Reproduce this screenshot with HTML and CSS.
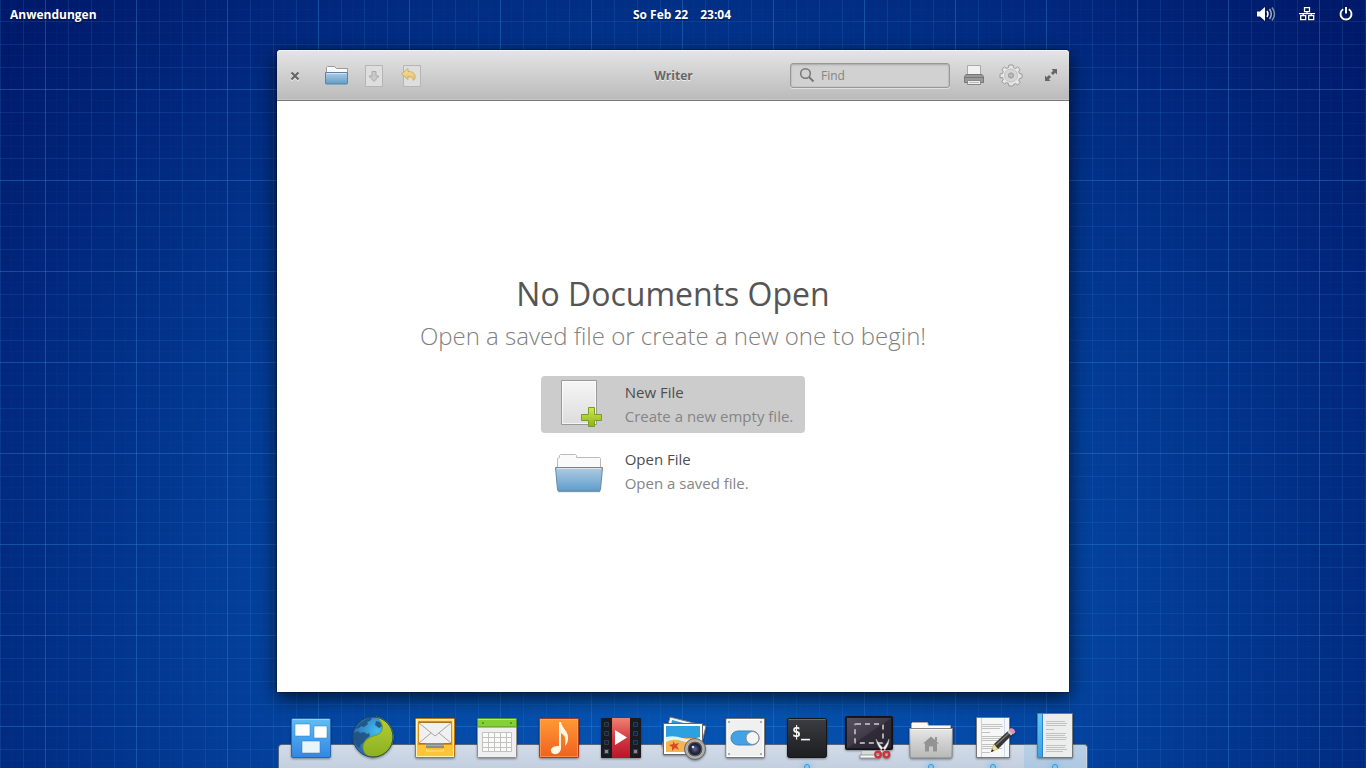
FILE: index.html
```html
<!DOCTYPE html>
<html lang="de">
<head>
<meta charset="utf-8">
<title>Writer</title>
<link rel="stylesheet" href="styles.css">
</head>
<body class="desktop">
<svg class="defs" aria-hidden="true">
  <defs>
    <linearGradient id="blue" x2="0" y2="1"><stop stop-color="#60bdef"/><stop offset="1" stop-color="#3386e5"/></linearGradient>
    <linearGradient id="cyan" x2="0" y2="1"><stop stop-color="#62c8ee"/><stop offset="1" stop-color="#3f9fe6"/></linearGradient>
    <linearGradient id="folder" x2="0" y2="1"><stop stop-color="#b0cce3"/><stop offset="1" stop-color="#5f9dcb"/></linearGradient>
    <linearGradient id="paper" x2="0" y2="1"><stop stop-color="#f6f6f6"/><stop offset="1" stop-color="#dcdcdc"/></linearGradient>
    <linearGradient id="green" x2="0" y2="1"><stop stop-color="#d2e84c"/><stop offset="1" stop-color="#8cb41a"/></linearGradient>
    <linearGradient id="lime" x2="0" y2="1"><stop stop-color="#b3cf36"/><stop offset="1" stop-color="#8db01f"/></linearGradient>
    <radialGradient id="sea" cx=".6" cy=".35" r=".6"><stop stop-color="#43bdf0"/><stop offset="1" stop-color="#2a6cb4"/></radialGradient>
    <linearGradient id="amber" x2="0" y2="1"><stop stop-color="#ffe08a"/><stop offset=".6" stop-color="#ffc83c"/><stop offset="1" stop-color="#f9b02c"/></linearGradient>
    <linearGradient id="orange" x2="0" y2="1"><stop stop-color="#ff9a35"/><stop offset="1" stop-color="#f0601f"/></linearGradient>
    <linearGradient id="red" x2="0" y2="1"><stop stop-color="#f08070"/><stop offset=".55" stop-color="#d03540"/><stop offset="1" stop-color="#ba1528"/></linearGradient>
    <linearGradient id="dark" x2="0" y2="1"><stop stop-color="#3a3d42"/><stop offset="1" stop-color="#1c1e20"/></linearGradient>
    <linearGradient id="screen" x2="1" y2="1"><stop stop-color="#555060"/><stop offset=".5" stop-color="#403a48"/><stop offset=".51" stop-color="#302b38"/><stop offset="1" stop-color="#282430"/></linearGradient>
    <linearGradient id="silver" x2="0" y2="1"><stop stop-color="#e6e6e6"/><stop offset="1" stop-color="#b8b8b8"/></linearGradient>
    <radialGradient id="lens"><stop stop-color="#7c5f9b"/><stop offset=".6" stop-color="#27334e"/><stop offset="1" stop-color="#141a27"/></radialGradient>
    <linearGradient id="gold" x2="0" y2="1"><stop stop-color="#f7e3a0"/><stop offset="1" stop-color="#e4bd68"/></linearGradient>
  </defs>
</svg>

<header class="panel">
  <a class="panel-item" href="#apps">Anwendungen</a>
  <time class="panel-clock"><span>So Feb 22</span><span>23:04</span></time>
  <div class="indicators">
    <button class="indicator" aria-label="Lautstärke"><svg width="20" height="16" viewBox="0 0 20 16"><path d="M1 5.500h3L9 1v14L4 10.500H1z" fill="#fff"/><g fill="none" stroke="#fff" stroke-width="1.500"><path d="M11 5q2 3 0 6"/><path d="M13.500 3q3.500 5 0 10" opacity=".65"/><path d="M16 1.500q5 6.500 0 13" opacity=".5"/></g></svg></button>
    <button class="indicator" aria-label="Netzwerk"><svg width="16" height="16" viewBox="0 0 16 16" fill="none" stroke="#fff" stroke-width="1.300"><path d="M5.500 1.700h5v4h-5zM1.700 9.700h5v4h-5zM9.700 9.700h5v4h-5zM8 6v1.700M0 7.700h16M4.200 8v2M12.200 8v2"/></svg></button>
    <button class="indicator" aria-label="Sitzung"><svg width="16" height="16" viewBox="0 0 16 16" fill="none" stroke="#fff" stroke-width="1.900"><path d="M5.200 3.300a5.500 5.500 0 1 0 5.600 0M8 1v6.500"/></svg></button>
  </div>
</header>

<main class="workspace">
  <section class="window" aria-label="Writer">
    <header class="titlebar">
      <div class="tools tools-start">
        <button class="tool tool-close" aria-label="Close"><svg width="12" height="12" viewBox="0 0 12 12"><path d="M2.500 3.500l7 7m0-7l-7 7" stroke="#f4f4f4" stroke-width="2.200"/><path d="M2.500 2.500l7 7m0-7l-7 7" stroke="#666" stroke-width="2.200"/></svg></button>
        <button class="tool" aria-label="Open"><svg width="24" height="24" viewBox="0 0 24 24"><path d="M1.500 10V3.500l1-1h7l2 2h11V10z" fill="#fafafa" stroke="#999"/><path d="M.5 8.500h22v10.500q0 1-1 1h-20q-1 0-1-1z" fill="url(#folder)" stroke="#5683a8"/><path d="M1.500 9.500h20" stroke="#d2e2ee"/></svg></button>
        <button class="tool" aria-label="Save"><svg width="24" height="24" viewBox="0 0 24 24"><path d="M2.500 1.500h17v21h-17z" fill="#dedede" stroke="#b5b5b5"/><path d="M9 7.500h4V12h3l-5 5.500L6 12h3z" fill="#c9c9c9" stroke="#aaa"/></svg></button>
        <button class="tool" aria-label="Revert"><svg width="24" height="24" viewBox="0 0 24 24"><path d="M2.500 1.500h17v21h-17z" fill="#dedede" stroke="#b5b5b5"/><path d="M.5 10L7 4.500v3q6 0 7 4 .8 3-1.500 5-.5-4-5.500-4v3z" fill="url(#gold)" stroke="#d5ad62"/></svg></button>
      </div>
      <h1 class="title">Writer</h1>
      <div class="tools tools-end">
        <label class="search"><svg width="16" height="16" viewBox="0 0 16 16" fill="none" stroke="#777"><circle cx="6.500" cy="6.500" r="4.800" stroke-width="1.500"/><path d="M10 10l4.500 4.500" stroke-width="2"/></svg><input class="search-input" type="text" placeholder="Find" aria-label="Find"></label>
        <button class="tool" aria-label="Print"><svg width="24" height="24" viewBox="0 0 24 24"><path d="M5.500 2.500h13v10h-13z" fill="#f1f1f1" stroke="#aaa"/><path d="M4 11.500h16l1.500 2v6h-19v-6z" fill="#999" stroke="#777"/><path d="M3 14.500h18" stroke="#777"/><path d="M5.500 17.500h13v4h-13z" fill="#eee" stroke="#888"/><path d="M7 19.500h10" stroke="#bbb"/></svg></button>
        <button class="tool" aria-label="Settings"><svg width="26" height="26" viewBox="0 0 26 26"><g fill="#e6e6e6" stroke="#999"><path d="M11 3h4l.6 2.600 1.800.8L19.700 5l2.400 2.400-1.400 2.300.8 1.800 2.500.6v3.800l-2.500.6-.8 1.800 1.400 2.300-2.400 2.400-2.300-1.400-1.800.8L15 24h-4l-.6-2.600-1.800-.8L6.300 22l-2.400-2.400 1.400-2.300-.8-1.800L2 15.900v-3.800l2.500-.6.8-1.800-1.400-2.300L6.300 5l2.300 1.400 1.800-.8z"/><circle cx="13" cy="13.500" r="6.500" fill="#d5d5d5" stroke="#c2c2c2"/><circle cx="13" cy="13.500" r="2.600" fill="#b8b8b8"/></g></svg></button>
        <button class="tool tool-max" aria-label="Maximize"><svg width="14" height="14" viewBox="0 0 14 14"><path d="M7.500 1H13v5.500l-1.700-1.700L9 7.100 6.900 5l2.300-2.300zM1 7.500l1.700 1.700L5 6.900 7.100 9l-2.300 2.300L6.500 13H1z" fill="#666"/></svg></button>
      </div>
    </header>
    <div class="welcome">
      <h2 class="welcome-title">No Documents Open</h2>
      <p class="welcome-text">Open a saved file or create a new one to begin!</p>
      <div class="choices">
        <button class="choice choice-active">
          <svg width="48" height="48" viewBox="0 1 48 48"><path d="M6.500 1.500h35v44h-35z" fill="url(#paper)" stroke="#999"/><path d="M7.500 2.500h33v42h-33z" fill="none" stroke="#fff" opacity=".7"/><path d="M33.500 28.500h6v7h7v6h-7v6h-6v-6h-7v-6h7z" fill="url(#green)" stroke="#7a9c29"/></svg>
          <span class="choice-text"><span class="choice-name">New File</span><span class="choice-note">Create a new empty file.</span></span>
        </button>
        <button class="choice">
          <svg width="48" height="48" viewBox="0 -2 48 48"><path d="M2.500 20V9.500l2-1V6.500l1-1h15l1 1v2h23l1 1V20z" fill="#fafafa" stroke="#bbb"/><path d="M.5 18.500h47l-2 22q0 1.500-1.500 1.500H4q-1.500 0-1.500-1.500z" fill="url(#folder)" stroke="#6489a6"/><path d="M2 19.500h44" stroke="#d7e4ee"/><path d="M3 42.700h42" stroke="#476987" opacity=".6"/></svg>
          <span class="choice-text"><span class="choice-name">Open File</span><span class="choice-note">Open a saved file.</span></span>
        </button>
      </div>
    </div>
  </section>
</main>

<nav class="dock" aria-label="Dock">
  <a class="app" href="#multitasking" aria-label="Arbeitsflächen"><svg class="app-icon" viewBox="0 0 62 55"><rect x="11.500" y="5.500" width="39" height="39" rx="1.500" fill="url(#blue)" stroke="#2468ae"/><path d="M12.500 6.500h37" stroke="#8ed4f7"/><g fill="#fff" stroke="#2b7bc6" stroke-opacity=".5"><path d="M15 11h15v12H15zM34 13h13v12H34z"/><path d="M22 28h18v12H22z" fill="#e8f6fa"/></g></svg></a>
  <a class="app" href="#web" aria-label="Internet"><svg class="app-icon" viewBox="0 0 62 55"><circle cx="31" cy="24" r="20" fill="url(#sea)"/><path d="M18 10l6-4 7-2-3 4-3 1 1 2-4 3-3-1-2 2-4 1zM12 20l4-2 2 2 4-1 3 2 2-1 1 3-4 3-2 4-3 1-2 4-3-3-2-5-1-3zM34 8l4 1 2 4-3 2-4-3z" fill="#204f7c" opacity=".85"/><path d="M34 4C42 9 43 19 35 22c-7 2-14 5-14 12 0 5 3 8 7 10A20 20 0 0 0 34 4z" fill="url(#lime)" stroke="#7c9b1c"/><circle cx="31" cy="24" r="20" fill="none" stroke="#294c60"/></svg></a>
  <a class="app" href="#mail" aria-label="E-Mail"><svg class="app-icon" viewBox="0 0 62 55"><rect x="11.500" y="5.500" width="39" height="39" rx="1" fill="url(#amber)" stroke="#b47514"/><path d="M12.500 6.500h37v37h-37z" fill="none" stroke="#fff0b4"/><path d="M14.500 8.500h33v23h-33z" fill="#a87524" stroke="#d68f18"/><path d="M15 10h32v20H15z" fill="#f0f0f0"/><path d="M15 10l16 13 16-13M15 30l12-10M47 30L35 20" fill="none" stroke="#a5a5a5"/><path d="M13 32h9v4h18v-4h9v11H13z" fill="#ffc43c"/><path d="M22 30h18v5H22z" fill="#8c8c88"/><path d="M22 32.500h18" stroke="#aaa"/><path d="M22.500 36v2h17v-2" fill="none" stroke="#ffe391"/></svg></a>
  <a class="app" href="#calendar" aria-label="Kalender"><svg class="app-icon" viewBox="0 0 62 55"><rect x="11.500" y="5.500" width="39" height="39" rx="1" fill="#efefef" stroke="#8e8e8e"/><path d="M11.500 14V6.500l1-1h37l1 1V14z" fill="#86cf37" stroke="#55991c"/><path d="M12.500 6.500h37" stroke="#b8ea78"/><path d="M16 9h2v2h-2zM44 9h2v2h-2z" fill="#579b24"/><path d="M16.500 19.500h29v19h-29zM22.500 19v19M28.500 19v19M34.500 19v19M40.500 19v19M16 24.500h29M16 29.500h29M16 34.500h29" fill="#fafafa" stroke="#c2c2c0"/></svg></a>
  <a class="app" href="#music" aria-label="Musik"><svg class="app-icon" viewBox="0 0 62 55"><rect x="11.500" y="5.500" width="39" height="39" rx="1" fill="url(#orange)" stroke="#a83c1e"/><path d="M12.500 6.500h37v37h-37z" fill="none" stroke="#ffb46a" opacity=".55"/><path d="M31 9h2c1 7 8 9 7 17-.3 3-1 5-3 7 1-6 1-10-4-13v15c0 4-4 7-7 6-6-2-3-9 5-8z" fill="#fff7e6"/></svg></a>
  <a class="app" href="#videos" aria-label="Videos"><svg class="app-icon" viewBox="0 0 62 55"><rect x="11" y="5" width="40" height="40" rx="1" fill="#191b20"/><path d="M22 5h18v40H22z" fill="url(#red)"/><path d="M25 17v15l12-7.500z" fill="#fff"/><g fill="#07264f" stroke="#353a40"><path d="M14.500 9.500h4v4h-4zM14.500 18.500h4v4h-4zM14.500 27.500h4v4h-4zM43.500 9.500h4v4h-4zM43.500 18.500h4v4h-4zM43.500 27.500h4v4h-4z"/><path d="M14.500 36.500h4v4h-4zM43.500 36.500h4v4h-4z" fill="#888"/></g></svg></a>
  <a class="app" href="#photos" aria-label="Fotos"><svg class="app-icon" viewBox="0 0 62 55"><path d="M18 4l36 9-7 29-37-9z" fill="#f6f6f6" stroke="#777"/><path d="M20 7l31 8-2 7-30-8z" fill="#259bd8"/><path d="M11.500 10.500h39v31h-39z" fill="#fff" stroke="#666"/><path d="M14 13h34v26H14z" fill="#f3b552"/><path d="M14 13h34v12H14z" fill="#2da1df"/><path d="M14 24q8-2 16 1t18-1v3q-10 4-18 1t-16 1z" fill="#dff4f7"/><path d="M21 28l2 3 4-1-2 3 2 4-4-2-3 3v-4l-3-2 4-1z" fill="#db4c24"/><circle cx="43" cy="36" r="10.500" fill="#aaa" stroke="#666"/><circle cx="43" cy="36" r="8" fill="#555" stroke="#bbb"/><circle cx="43" cy="36" r="6" fill="url(#lens)"/><circle cx="41" cy="34" r="1.300" fill="#d7dbf5"/></svg></a>
  <a class="app" href="#settings" aria-label="Einstellungen"><svg class="app-icon" viewBox="0 0 62 55"><rect x="12" y="5.500" width="38.500" height="39" rx="1" fill="#f0f0f0" stroke="#777"/><path d="M13 6.500h36v37H13z" fill="none" stroke="#fff"/><g fill="#999"><circle cx="15" cy="9" r="1"/><circle cx="47" cy="9" r="1"/><circle cx="15" cy="41" r="1"/><circle cx="47" cy="41" r="1"/></g><rect x="17" y="18" width="28" height="14" rx="7" fill="#42a2e5" stroke="#3f85b8"/><circle cx="38.500" cy="25" r="6.500" fill="#f5f5f5" stroke="#888"/></svg></a>
  <a class="app app-running" href="#terminal" aria-label="Terminal"><svg class="app-icon" viewBox="0 0 62 55"><rect x="11.500" y="5.500" width="39" height="39" rx="2" fill="url(#dark)" stroke="#15171a"/><path d="M12.500 6.500h37" stroke="#666a70"/><text class="prompt" x="16" y="24">$_</text></svg></a>
  <a class="app" href="#screenshot" aria-label="Bildschirmfoto"><svg class="app-icon" viewBox="0 0 62 55"><path d="M24 38h15v5h-15z" fill="#d8dada"/><path d="M22 42h19v3H22z" fill="#fafafa" stroke="#999"/><rect x="7.500" y="3.500" width="47" height="33" rx="1" fill="#191820" stroke="#15131a"/><path d="M9 5h44v30H9z" fill="url(#screen)"/><rect x="17" y="11" width="28" height="19" rx="1" fill="none" stroke="#aaa" stroke-width="2" stroke-dasharray="5 4"/><path d="M38 26c1 6 4 10 8 14l2-2c-4-4-7-7-10-12zM51 26c0 6-3 10-7 14l-2-2c4-4 7-7 9-12z" fill="#f4f4f4" stroke="#aaa" stroke-width=".5"/><g fill="none" stroke="#cf3338" stroke-width="2.200"><circle cx="40" cy="41.500" r="2.800"/><circle cx="48.500" cy="41.500" r="2.800"/></g></svg></a>
  <a class="app app-running" href="#files" aria-label="Dateien"><svg class="app-icon" viewBox="0 0 62 55"><path d="M11.500 20V10.500l1-1h15l1 3h22V20z" fill="#fafafa" stroke="#aaa"/><path d="M9.500 15.500h43l-.5 28.500-1 1H11l-1-1z" fill="url(#silver)" stroke="#858585"/><path d="M11 16.500h41" stroke="#f5f5f5"/><path d="M31 23.500l8 7h-2v8h-4v-5h-4v5h-4v-8h-2zM35 24h2v4h-2z" fill="#939393"/></svg></a>
  <a class="app app-running" href="#editor" aria-label="Texteditor"><svg class="app-icon" viewBox="0 0 62 55"><path d="M14.500 4.500h33v40h-33z" fill="#f7f7f7" stroke="#777"/><path d="M19.500 5v39" stroke="#f1bcc4"/><path d="M42.500 5v39" stroke="#cedaf0"/><path d="M20 11.500h20M20 13.500h21M20 15.500h18M20 19.500h8M20 23.500h21M20 25.500h19M20 27.500h21M20 31.500h21M20 33.500h19M20 35.500h20M20 39.500h8" stroke="#c2c2c2"/><path d="M29 39l3-8 14-13 4 4-14 14z" fill="#363636"/><path d="M34 32l13-12" stroke="#777" stroke-width="1.500"/><path d="M29 39l3-8 4 5z" fill="#efe18a"/><path d="M29 39l1-3 2 2z" fill="#222"/><path d="M45 18.500l2-2 4 4-2 2z" fill="#ccc"/><path d="M47 16.500l1-1q2-1 4 1t1 3l-2 2z" fill="#e990b6"/></svg></a>
  <a class="app app-running app-active" href="#writer" aria-label="Writer"><svg class="app-icon" viewBox="0 0 62 55"><path d="M13.500.5h35v44h-35z" fill="#eceeee" stroke="#727777"/><path d="M14 1h5v43h-5z" fill="url(#cyan)"/><path d="M18.500 1v43" stroke="#2884cf"/><path d="M22 8.500h19M22 10.500h21M22 12.500h20M22 16.500h8M22 20.500h20M22 22.500h19M22 24.500h21M22 26.500h20M22 32.500h20M22 34.500h19M22 36.500h21M22 38.500h17" stroke="#c2c2c2"/></svg></a>
</nav>
</body>
</html>
```
FILE: styles.css
```css
*,
*::before,
*::after {
  box-sizing: border-box;
}

.desktop {
  --line: rgba(44, 124, 205, .45);
  --thin: rgba(44, 124, 205, .2);
  --faint: rgba(44, 124, 205, .04);
  display: flex;
  flex-direction: column;
  height: 100vh;
  margin: 0;
  overflow: hidden;
  font-family: "Open Sans", "Noto Sans", sans-serif;
  font-size: 12px;
  color: #555;
  background:
    linear-gradient(90deg, var(--line) 1px, transparent 1px 11px, var(--faint) 11px 12px, transparent 12px 23px, var(--thin) 23px 24px, transparent 24px 34px, var(--faint) 34px 35px, transparent 35px 46px, var(--thin) 46px 47px, transparent 47px 57px, var(--faint) 57px 58px, transparent 58px 69px, var(--thin) 69px 70px, transparent 70px 80px, var(--faint) 80px 81px, transparent 81px) 45px 0 / 91px 91px,
    linear-gradient(var(--line) 1px, transparent 1px 11px, var(--faint) 11px 12px, transparent 12px 23px, var(--thin) 23px 24px, transparent 24px 34px, var(--faint) 34px 35px, transparent 35px 46px, var(--thin) 46px 47px, transparent 47px 57px, var(--faint) 57px 58px, transparent 58px 69px, var(--thin) 69px 70px, transparent 70px 80px, var(--faint) 80px 81px, transparent 81px) 0 89px / 91px 91px,
    radial-gradient(ellipse 900px 900px at 50% 84%, #0656b5, #0446a2 40%, #012a80 78%, #001a6b);
}

.defs {
  position: absolute;
  width: 0;
  height: 0;
}

button {
  padding: 0;
  border: 0;
  background: none;
  font: inherit;
  color: inherit;
}

svg {
  display: block;
  flex: none;
}

.panel {
  display: grid;
  grid-template-columns: 1fr auto 1fr;
  align-items: center;
  height: 30px;
  padding: 0 12px 2px 10px;
  color: #fff;
  font-weight: 700;
  text-shadow: 0 1px 2px rgba(0, 0, 0, .6);
}

.panel-item {
  color: inherit;
  text-decoration: none;
}

.panel-clock {
  display: flex;
  gap: 12px;
}

.indicators {
  display: flex;
  justify-content: flex-end;
  align-items: center;
  gap: 23px;
}

.indicator {
  filter: drop-shadow(0 1px 1px rgba(0, 0, 0, .5));
}

.workspace {
  display: flex;
  flex: 1;
  padding: 20px 297px 0 277px;
}

.window {
  display: flex;
  flex: 1;
  flex-direction: column;
  border-radius: 4px 4px 0 0;
  background: #fff;
  box-shadow: 0 0 0 1px rgba(0, 0, 0, .2), 0 6px 20px rgba(0, 0, 0, .7);
}

.titlebar {
  display: grid;
  grid-template-columns: 1fr auto 1fr;
  align-items: center;
  height: 51px;
  padding: 0 11px 0 12px;
  border-bottom: 1px solid #777;
  border-radius: 4px 4px 0 0;
  background: linear-gradient(#e5e5e5, #bababa);
  box-shadow: inset 0 1px #f5f5f5, inset 0 -1px #c9c9c9;
}

.tools {
  display: flex;
  align-items: center;
  gap: 14px;
}

.tools-start {
  padding-top: 2px;
}

.tool-close {
  margin-right: 10px;
}

.tools-end {
  justify-content: flex-end;
  gap: 12px;
}

.tool-max {
  margin-left: 8px;
}

.title {
  margin: 0;
  font-size: 12px;
  color: #666;
  text-shadow: 0 1px #eee;
}

.search {
  display: flex;
  align-items: center;
  gap: 6px;
  width: 160px;
  height: 25px;
  padding: 0 8px;
  border: 1px solid #989898;
  border-radius: 3px;
  background: #d1d1d1;
  box-shadow: inset 0 0 0 1px rgba(0, 0, 0, .04), inset 0 1px 2px rgba(0, 0, 0, .15), 0 1px #e0e0e0;
}

.search-input {
  flex: 1;
  min-width: 0;
  padding: 0;
  border: 0;
  outline: 0;
  background: none;
  font: inherit;
  color: #555;
}

.search-input::placeholder {
  color: #858585;
}

.welcome {
  display: flex;
  flex: 1;
  flex-direction: column;
  align-items: center;
  justify-content: center;
  padding-bottom: 22px;
}

.welcome-title {
  margin: 0;
  font-size: 32px;
  font-weight: 400;
  line-height: 44px;
  color: #555;
}

.welcome-text {
  margin: 0;
  font-size: 24px;
  font-weight: 300;
  line-height: 40px;
  color: #808080;
}

.choices {
  display: flex;
  flex-direction: column;
  gap: 10px;
  margin-top: 20px;
}

.choice {
  display: flex;
  align-items: center;
  gap: 22px;
  height: 57px;
  padding: 0 12px 0 14px;
  border-radius: 4px;
  font-size: 15px;
  line-height: 24px;
  text-align: left;
}

.choice-active {
  background: #ccc;
}

.choice-text {
  display: flex;
  flex-direction: column;
}

.choice-name {
  color: #4d4d4d;
}

.choice-note {
  color: #858585;
}

.dock {
  position: relative;
  display: flex;
  flex: none;
  align-self: center;
  height: 76px;
  padding: 21px 2px 0;
}

.dock::before {
  content: "";
  position: absolute;
  inset: 52px 0 0;
  border: 1px solid #53647e;
  border-bottom: 0;
  border-radius: 4px 4px 0 0;
  background: linear-gradient(#d2dbe8, #c3cfe0);
}

.app {
  position: relative;
  width: 62px;
}

.app-icon {
  width: 62px;
  height: 55px;
  filter: drop-shadow(0 1px 1px rgba(0, 0, 0, .4));
}

.app-active {
  background: linear-gradient(transparent 31px, rgba(126, 184, 229, .3) 32px);
}

.app-running::after {
  content: "";
  position: absolute;
  bottom: -2px;
  left: 28px;
  width: 6px;
  height: 6px;
  border: 1px solid #3499d7;
  border-radius: 50%;
  background: #86c9ee;
  box-shadow: 0 0 5px 2px rgba(82, 181, 242, .4);
}

.prompt {
  fill: #f4f4f4;
  font-family: "DejaVu Sans Mono", monospace;
  font-size: 15px;
  font-weight: 700;
}
```
